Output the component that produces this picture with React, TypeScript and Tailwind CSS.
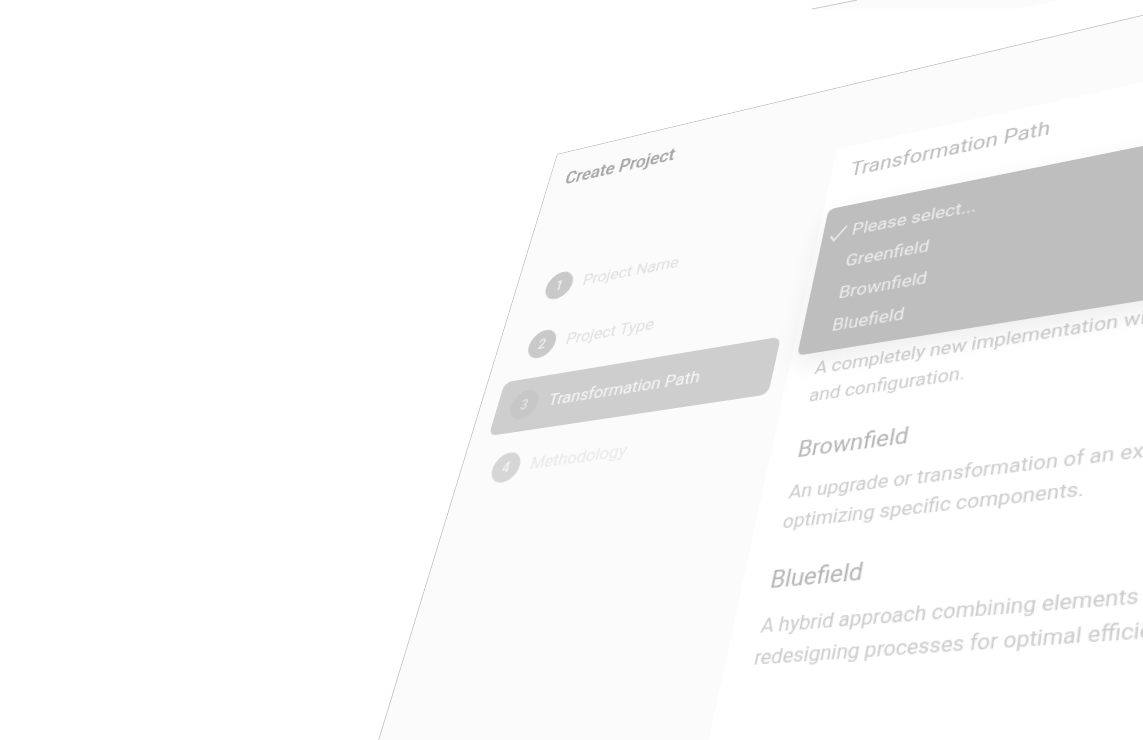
const Step = ({ n, label, active, faint }: { n: number; label: string; active?: boolean; faint?: boolean }) => (
  <div className={`flex h-[56px] w-[288px] items-center gap-3 rounded-lg px-4 ${active ? "bg-[#cecece] text-[#f7f7f7]" : faint ? "text-[#e9e9e9]" : "text-[#dfdfdf]"}`}>
    <span className={`flex h-[30px] w-[30px] shrink-0 items-center justify-center rounded-full text-sm font-semibold ${active ? "bg-[#c7c7c7] text-[#e2e2e2]" : faint ? "bg-[#d6d6d6] text-[#f0f0f0]" : "bg-[#c9c9c9] text-[#eeeeee]"}`}>{n}</span>
    <span className="text-[17.2px]">{label}</span>
  </div>
);

const Option = ({ title, lines }: { title: string; lines: string[] }) => (
  <div className="mb-[23px]">
    <h3 className="mb-[11px] text-[20.5px] leading-7 text-[#b4b4b4]">{title}</h3>
    {lines.map((line) => (
      <p key={line} className="whitespace-nowrap text-[17px] leading-[26px] text-[#cbcbcb]">{line}</p>
    ))}
  </div>
);

export default function App() {
  return (
    <div className="relative h-[740px] w-[1143px] overflow-hidden bg-white font-['Roboto','Liberation_Sans',sans-serif]">
      {/* scrap of the window behind, cut by the top of the page */}
      <svg className="absolute left-[800px] top-0 h-[12px] w-[300px]" viewBox="0 0 300 12">
        <polygon points="12,9 57,0 260,0 220,8.5 30,8.5" fill="#fbfbfb" />
        <line x1="12" y1="9" x2="57" y2="0" stroke="#bdbdbd" strokeWidth="0.8" />
      </svg>
      <div className="absolute left-0 top-0 h-[900px] w-[1300px] origin-top-left [transform:matrix3d(0.678,-0.238,0,-0.000269,-0.392,0.774,0,-0.000258,0,0,1,0,557,154,0,1)]">
        <div className="flex h-full border-l border-t border-[#c6c6c6] bg-[#fbfbfb]">
          <aside className="w-[323px] shrink-0 px-5 pt-[21px] blur-[0.7px]">
            <h1 className="text-[19.5px] font-semibold leading-7 text-[#a6a6a6]">Create Project</h1>
            <div className="mt-[87px] flex flex-col gap-2">
              <Step n={1} label="Project Name" />
              <Step n={2} label="Project Type" />
              <Step n={3} label="Transformation Path" active />
              <Step n={4} label="Methodology" faint />
            </div>
          </aside>
          <main className="relative mt-[72px] flex-1 bg-white pl-[25px] pt-[13px]">
            <div className="blur-[0.7px]">
              <h2 className="-ml-1.5 mb-[136px] text-[20px] leading-7 text-[#bababa]">Transformation Path</h2>
              <Option title="Greenfield" lines={["A completely new implementation with fresh data", "and configuration."]} />
              <Option title="Brownfield" lines={["An upgrade or transformation of an existing system,", "optimizing specific components."]} />
              <Option title="Bluefield" lines={["A hybrid approach combining elements of both,", "redesigning processes for optimal efficiency."]} />
            </div>
            <div className="absolute left-[5px] top-[66px] h-[148px] w-[800px] rounded-md bg-[#bebebe] py-[11px] pl-[28px] text-[17px] leading-[32px] text-[#ececec] shadow-[0_8px_24px_rgba(0,0,0,0.08)] blur-[0.6px]">
              <div className="relative">
                <svg className="absolute -left-[22px] top-[9px] h-[18px] w-[18px]" viewBox="0 0 18 18" fill="none" stroke="#ececec" strokeWidth="1.8">
                  <path d="M2 10l4 5L16 2" />
                </svg>
                Please select...
              </div>
              <div>Greenfield</div>
              <div>Brownfield</div>
              <div>Bluefield</div>
            </div>
          </main>
        </div>
      </div>
    </div>
  );
}
